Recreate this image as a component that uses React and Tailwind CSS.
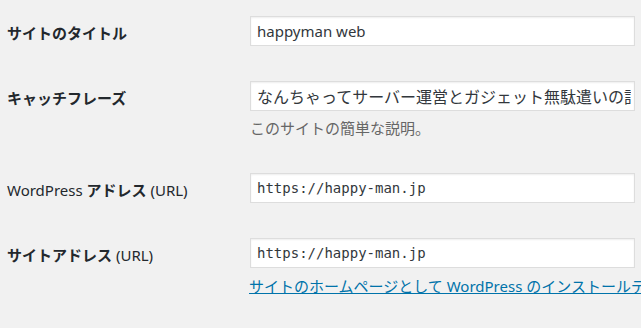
const jp = { fontFamily: '"Noto Sans", "Noto Sans CJK JP", sans-serif' };
const mono = { fontFamily: '"DejaVu Sans Mono", "Liberation Mono", monospace' };

const Field = ({ value, code, size = "text-[16px]" }) => (
  <input
    readOnly
    value={value}
    style={code ? mono : jp}
    className={`block w-[385px] h-[30px] border border-[#dddddd] bg-white pl-[6px] pr-[3px] text-[#32373c] shadow-[inset_0_1px_2px_rgba(0,0,0,0.07)] outline-none ${code ? "text-[14px]" : size}`}
  />
);

const Row = ({ label, top, children }) => (
  <div className="flex" style={{ paddingTop: top }}>
    <div className="w-[250px] shrink-0 pl-[7px] pt-[7px] text-[15px] leading-[20px] text-[#23282d]" style={jp}>
      {label}
    </div>
    <div className="min-w-0">{children}</div>
  </div>
);

export default function App() {
  return (
    <div className="w-[641px] h-[328px] overflow-hidden bg-[#f1f1f1]" style={jp}>
      <div className="h-[65px]">
        <Row top={16} label={<span className="font-bold">サイトのタイトル</span>}>
          <Field value="happyman web" size="text-[15px]" />
        </Row>
      </div>
      <div className="h-[93px]">
        <Row top={16} label={<span className="font-bold">キャッチフレーズ</span>}>
          <Field value="なんちゃってサーバー運営とガジェット無駄遣いの記録" />
          <p className="mt-[7px] text-[15px] leading-[21px] text-[#666666]">このサイトの簡単な説明。</p>
        </Row>
      </div>
      <div className="h-[65px]">
        <Row
          top={15}
          label={
            <span>
              WordPress <span className="font-bold">アドレス</span> (URL)
            </span>
          }
        >
          <Field value="https://happy-man.jp" code />
        </Row>
      </div>
      <div>
        <Row
          top={15}
          label={
            <span>
              <span className="font-bold">サイトアドレス</span> (URL)
            </span>
          }
        >
          <Field value="https://happy-man.jp" code />
          <a href="#" className="mt-2 block whitespace-nowrap text-[15px] leading-[21px] text-[#0073aa] underline -ml-px">
            サイトのホームページとして WordPress のインストールディレクトリとは異なる場所を設定する場合は、ここにアドレスを入力してください。
          </a>
        </Row>
      </div>
    </div>
  );
}
